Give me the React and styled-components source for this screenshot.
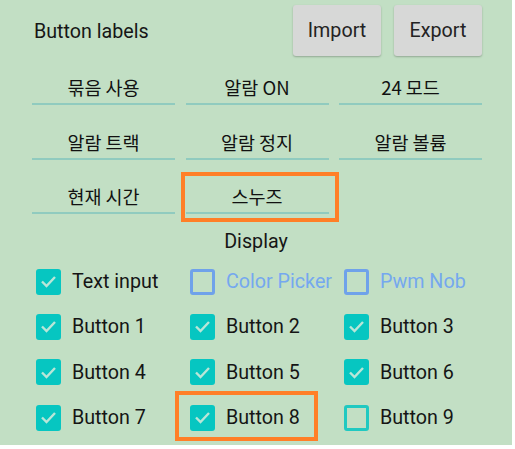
import React from "react";
import styled, { createGlobalStyle, css } from "styled-components";

const GlobalStyle = createGlobalStyle`
  html, body {
    margin: 0;
    padding: 0;
    background: #ffffff;
  }
  *, *::before, *::after {
    box-sizing: border-box;
  }
`;

const labels = ["묶음 사용", "알람 ON", "24 모드", "알람 트랙", "알람 정지", "알람 볼륨", "현재 시간", "스누즈"];

const displayItems = [
  { label: "Text input", checked: true },
  { label: "Color Picker", checked: false, tone: "blue" },
  { label: "Pwm Nob", checked: false, tone: "blue" },
  { label: "Button 1", checked: true },
  { label: "Button 2", checked: true },
  { label: "Button 3", checked: true },
  { label: "Button 4", checked: true },
  { label: "Button 5", checked: true },
  { label: "Button 6", checked: true },
  { label: "Button 7", checked: true },
  { label: "Button 8", checked: true, marked: true },
  { label: "Button 9", checked: false }
];

const App = () => (
  <>
    <GlobalStyle />
    <Panel>
      <Header>
        <Title>Button labels</Title>
        <Actions>
          <ActionButton>Import</ActionButton>
          <ActionButton>Export</ActionButton>
        </Actions>
      </Header>

      <LabelGrid>
        {labels.map((text, i) => (
          <Field key={text} marked={i === 7}>
            {text}
          </Field>
        ))}
      </LabelGrid>

      <SectionTitle>Display</SectionTitle>

      <CheckGrid>
        {displayItems.map(item => (
          <CheckItem key={item.label} marked={item.marked}>
            <Box checked={item.checked} tone={item.tone}>
              {item.checked && (
                <svg width="17" height="13" viewBox="0 0 17 13">
                  <path d="M2 6.5 L6.5 11 L15 2" fill="none" stroke="#b9e6d8" strokeWidth="2.4" />
                </svg>
              )}
            </Box>
            <CheckLabel tone={item.tone}>{item.label}</CheckLabel>
          </CheckItem>
        ))}
      </CheckGrid>
    </Panel>
  </>
);

const Panel = styled.div`
  width: 512px;
  height: 445px;
  background: #c2dfc4;
  padding-top: 5px;
  font-family: Roboto, "Noto Sans CJK KR", sans-serif;
  font-size: 19.7px;
  color: #161616;
  overflow: hidden;
`;

const Header = styled.div`
  display: flex;
  align-items: center;
  justify-content: space-between;
  padding: 0 30px 0 34px;
`;

const Title = styled.div`
  padding-top: 2px;
`;

const Actions = styled.div`
  display: flex;
  gap: 13px;
`;

const ActionButton = styled.div`
  width: 88px;
  height: 51px;
  display: flex;
  align-items: center;
  justify-content: center;
  background: #d7d8d7;
  border-radius: 3px;
  box-shadow: 0 1px 2px rgba(0, 0, 0, 0.25);
  color: #232323;
`;

const LabelGrid = styled.div`
  display: grid;
  grid-template-columns: repeat(3, 143px);
  column-gap: 10.5px;
  row-gap: 16.5px;
  padding-left: 32px;
  margin-top: 11px;
`;

const Field = styled.div`
  position: relative;
  height: 38px;
  display: flex;
  align-items: flex-end;
  justify-content: center;
  padding-bottom: 5px;
  border-bottom: 2px solid #90cbbf;
  font-family: "Noto Sans CJK KR", Roboto, sans-serif;
  font-size: 18.5px;
  line-height: 22px;
  color: #111111;
  ${({ marked }) =>
    marked &&
    css`
      &::after {
        content: "";
        position: absolute;
        left: -5px;
        right: -10px;
        top: -4px;
        bottom: -10px;
        border: 4px solid #ff7f27;
      }
    `}
`;

const SectionTitle = styled.div`
  text-align: center;
  margin-top: 16px;
`;

const CheckGrid = styled.div`
  display: grid;
  grid-template-columns: repeat(3, 154px);
  grid-auto-rows: 45.3px;
  padding-left: 36px;
  margin-top: 6px;
`;

const CheckItem = styled.div`
  position: relative;
  display: flex;
  align-items: center;
  ${({ marked }) =>
    marked &&
    css`
      &::after {
        content: "";
        position: absolute;
        left: -15px;
        width: 143px;
        top: -4px;
        bottom: -1px;
        border: 4px solid #ff7f27;
      }
    `}
`;

const Box = styled.div`
  width: 25px;
  height: 26px;
  border-radius: 3px;
  display: flex;
  align-items: center;
  justify-content: center;
  flex-shrink: 0;
  background: ${({ checked }) => (checked ? "#06c6c1" : "transparent")};
  border: ${({ checked, tone }) =>
    checked ? "none" : tone === "blue" ? "3px solid #6fa2ea" : "3px solid #20c9c1"};
`;

const CheckLabel = styled.span`
  margin-left: 11px;
  color: ${({ tone }) => (tone === "blue" ? "#75a8ef" : "#151515")};
  white-space: nowrap;
`;

export default App;
